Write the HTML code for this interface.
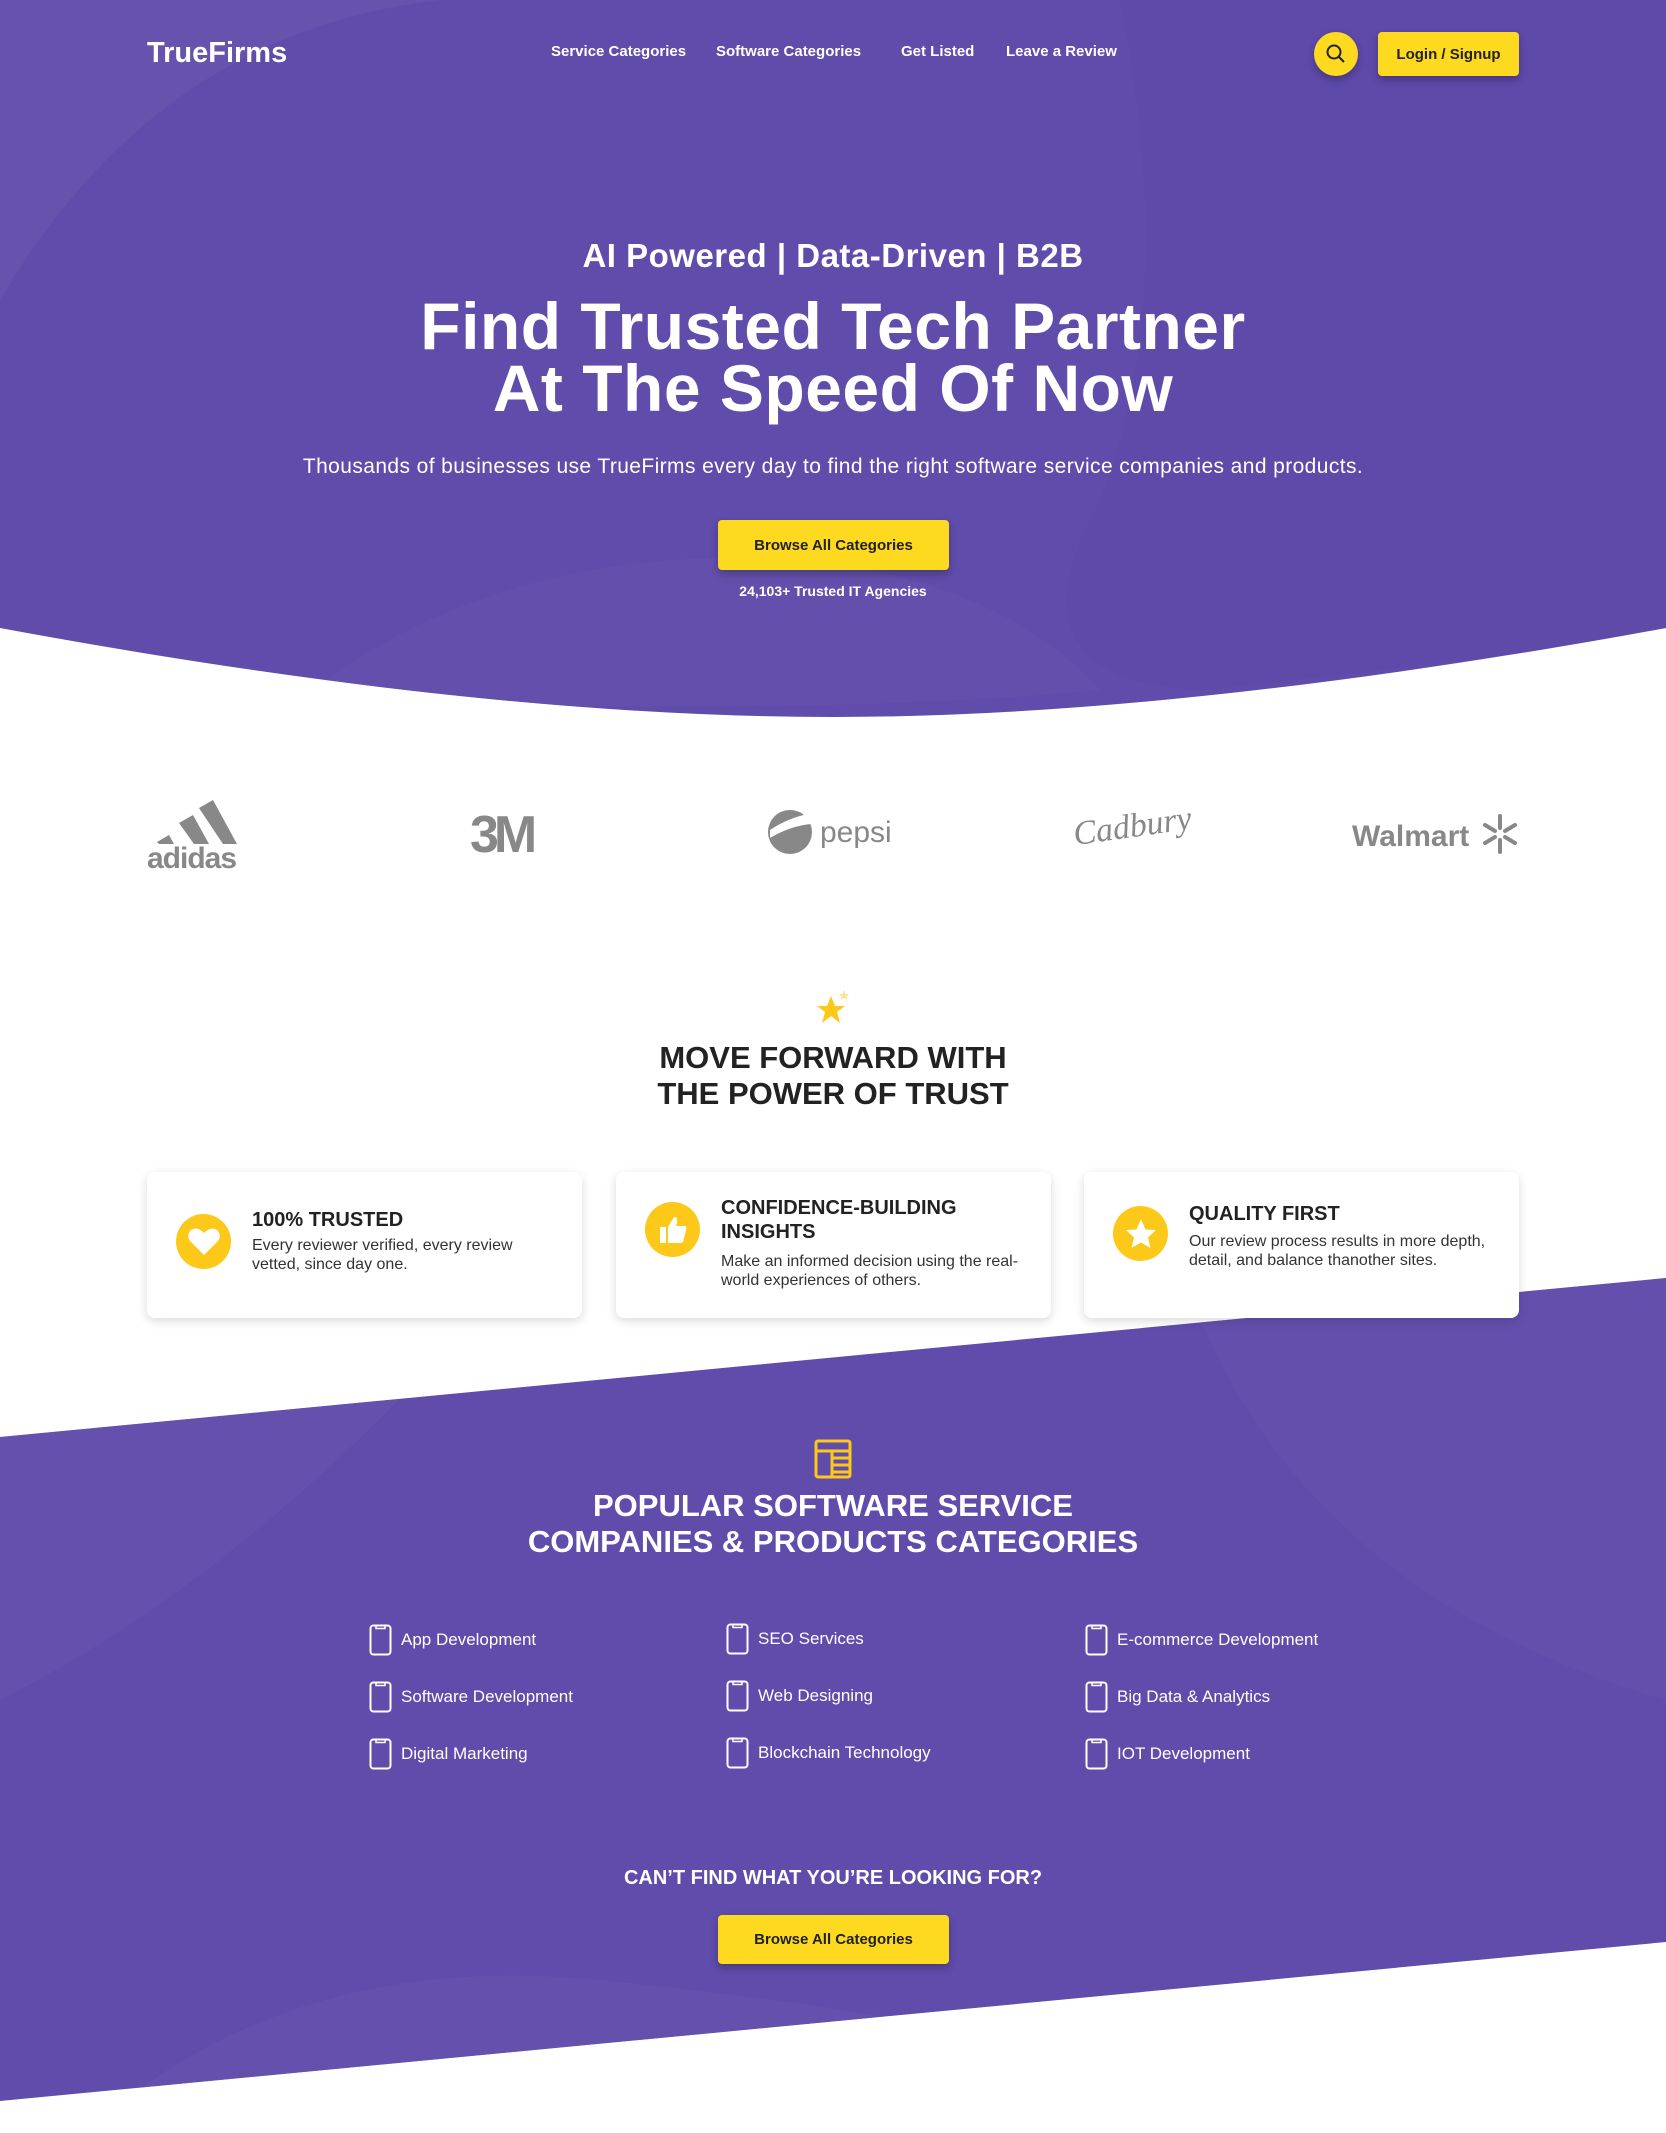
<!DOCTYPE html>
<html><head><meta charset="utf-8"><style>
*{margin:0;padding:0;box-sizing:border-box}
body{width:1666px;height:2133px;position:relative;overflow:hidden;background:#fff;font-family:"Liberation Sans",Arial,sans-serif;color:#222}
.abs{position:absolute}
.c{left:0;width:1666px;text-align:center}
.nav a{position:absolute;top:43px;color:#fff;font-weight:bold;font-size:15px;text-decoration:none;white-space:nowrap}
.btn{position:absolute;background:#fdd91f;border-radius:4px;box-shadow:0 4px 8px rgba(0,0,0,.25);color:#222;font-weight:bold;font-size:15px;display:flex;align-items:center;justify-content:center}
.card{position:absolute;top:1172px;width:435px;height:146px;background:#fff;border-radius:8px;box-shadow:0 3px 10px rgba(0,0,0,.15)}
.card .ic{position:absolute;left:29px;width:55px;height:55px;border-radius:50%;background:#fcc91a;display:flex;align-items:center;justify-content:center}
.card h3{position:absolute;left:105px;font-size:20px;font-weight:bold;color:#222;line-height:24px}
.card p{position:absolute;left:105px;font-size:16px;line-height:19px;color:#333;width:310px}
.cat{position:absolute;color:#fff;font-size:17px;white-space:nowrap}
.cat svg{position:absolute;left:-32px;top:-6px}
</style></head><body>
<svg class="abs" style="left:0;top:0" width="1666" height="2133">
<defs>
<clipPath id="h"><path d="M0 0H1666V628Q1180 717 833 717Q480 717 0 628Z"/></clipPath>
<clipPath id="s"><path d="M0 1437L1666 1278V1942L0 2101Z"/></clipPath>
</defs>
<path d="M0 0H1666V628Q1180 717 833 717Q480 717 0 628Z" fill="#5f4cab"/>
<g clip-path="url(#h)">
<path d="M0 300Q200 -40 600 0L0 0Z" fill="#6653ae"/>
<path d="M1120 0Q1180 300 1100 500Q1000 680 1200 690Q1666 640 1666 628V0Z" fill="#5c49a8" opacity=".6"/>
<path d="M300 700Q500 540 800 560Q1000 580 1100 690Q833 717 300 700Z" fill="#6653ae" opacity=".6"/>
</g>
<path d="M0 1437L1666 1278V1942L0 2101Z" fill="#5f4cab"/>
<g clip-path="url(#s)">
<path d="M0 1437L400 1399Q200 1600 0 1700Z" fill="#6653ae" opacity=".7"/>
<path d="M100 2120Q300 1950 600 1980Q800 2000 900 2020L900 2133H100Z" fill="#6653ae" opacity=".7"/>
<path d="M1200 1320Q1320 1600 1666 1700V1278Z" fill="#6653ae" opacity=".5"/>
</g>
</svg>
<div class="abs" style="left:147px;top:37px;color:#fff;font-weight:bold;font-size:29px">TrueFirms</div>
<div class="nav"><a style="left:551px">Service Categories</a><a style="left:716px">Software Categories</a><a style="left:901px">Get Listed</a><a style="left:1006px">Leave a Review</a></div>
<div class="abs" style="left:1314px;top:32px;width:44px;height:44px;border-radius:50%;background:#fdd91f;box-shadow:0 4px 8px rgba(0,0,0,.25)">
<svg width="44" height="44"><circle cx="20" cy="20" r="6.5" fill="none" stroke="#222" stroke-width="2"/><path d="M25 25L30 30" stroke="#222" stroke-width="2"/></svg></div>
<div class="btn" style="left:1378px;top:32px;width:141px;height:44px">Login / Signup</div>

<div class="abs c" style="top:237px;color:#fff;font-size:33px;font-weight:bold;letter-spacing:.5px">AI Powered | Data-Driven | B2B</div>
<div class="abs c" style="top:295px;color:#fff;font-size:66px;font-weight:bold;line-height:62px;letter-spacing:.5px">Find Trusted Tech Partner<br>At The Speed Of Now</div>
<div class="abs c" style="top:455px;color:#fff;font-size:21px;letter-spacing:.4px">Thousands of businesses use TrueFirms every day to find the right software service companies and products.</div>
<div class="btn" style="left:718px;top:520px;width:231px;height:50px">Browse All Categories</div>
<div class="abs c" style="top:583px;color:#fff;font-size:14px;font-weight:bold">24,103+ Trusted IT Agencies</div>

<!-- logos -->
<svg class="abs" style="left:147px;top:800px" width="105" height="70"><path d="M10 42L22 35L27 44H12Z M32 23L46 15L62 44H47Z M52 8L66 0L90 44H76Z" fill="#888"/><text x="0" y="68" font-family="Liberation Sans" font-weight="bold" font-size="30" fill="#888" letter-spacing="-1">adidas</text></svg>
<div class="abs" style="left:470px;top:805px;font-size:52px;font-weight:bold;color:#888;letter-spacing:-5px;font-family:'Liberation Sans'">3M</div>
<svg class="abs" style="left:768px;top:808px" width="135" height="50"><circle cx="22" cy="24" r="22" fill="#888"/><path d="M2 30Q22 18 43 16Q44 10 40 6Q20 10 2 22Z" fill="#fff"/><text x="52" y="34" font-family="Liberation Sans" font-size="30" fill="#888">pepsi</text></svg>
<div class="abs" style="left:1073px;top:808px;font-size:34px;font-style:italic;color:#888;font-family:'Liberation Serif',serif;transform:rotate(-8deg)">Cadbury</div>
<svg class="abs" style="left:1350px;top:812px" width="172" height="46"><text x="2" y="34" font-family="Liberation Sans" font-weight="bold" font-size="30" fill="#888">Walmart</text><g stroke="#888" stroke-width="4" stroke-linecap="round" transform="translate(150,22)"><path d="M0 -6V-18M0 6V18M5 -3L15 -9M5 3L15 9M-5 -3L-15 -9M-5 3L-15 9"/></g></svg>

<svg class="abs" style="left:812px;top:990px" width="40" height="40"><path d="M19 6L23 16L33 16L25 22L28 33L19 26L10 33L13 22L5 16L15 16Z" fill="#fcc91a"/><path d="M32 0L33.5 4L37 4L34.5 6.5L35.5 10L32 8L28.5 10L29.5 6.5L27 4L30.5 4Z" fill="#f8e39a"/></svg>
<div class="abs c" style="top:1040px;font-size:31px;font-weight:bold;line-height:36px;color:#222">MOVE FORWARD WITH<br>THE POWER OF TRUST</div>

<div class="card" style="left:147px"><div class="ic" style="top:42px"><svg width="34" height="30"><path d="M17 28L3 14Q-1 8 4 3Q10 -1 17 6Q24 -1 30 3Q35 8 31 14Z" fill="#fff"/></svg></div><h3 style="top:36px">100% TRUSTED</h3><p style="top:64px">Every reviewer verified, every review vetted, since day one.</p></div>
<div class="card" style="left:616px"><div class="ic" style="top:30px"><svg width="30" height="30"><rect x="2" y="12" width="6" height="16" fill="#fff"/><path d="M10 12L16 2Q20 2 19 8L18 11H27Q29 12 28 15L25 27Q24 28 22 28H10Z" fill="#fff"/></svg></div><h3 style="top:24px">CONFIDENCE-BUILDING<br>INSIGHTS</h3><p style="top:80px">Make an informed decision using the real-world experiences of others.</p></div>
<div class="card" style="left:1084px"><div class="ic" style="top:34px"><svg width="34" height="34"><path d="M17 2L21.5 12.5L32 13L24 20.5L26.5 31L17 25.5L7.5 31L10 20.5L2 13L12.5 12.5Z" fill="#fff"/></svg></div><h3 style="top:30px">QUALITY FIRST</h3><p style="top:60px;width:300px">Our review process results in more depth, detail, and balance thanother sites.</p></div>

<svg class="abs" style="left:814px;top:1439px" width="38" height="40"><rect x="2" y="2" width="34" height="36" rx="2" fill="none" stroke="#fcc91a" stroke-width="3"/><path d="M2 12H36M18 12V38M18 19H36M18 26H36M18 33H36" stroke="#fcc91a" stroke-width="3"/></svg>
<div class="abs c" style="top:1488px;font-size:31px;font-weight:bold;line-height:36px;color:#fff">POPULAR SOFTWARE SERVICE<br>COMPANIES &amp; PRODUCTS CATEGORIES</div>

<div class="cat" style="left:401px;top:1630px"><svg width="24" height="32"><rect x="1.5" y="1.5" width="20" height="29" rx="3" fill="none" stroke="#fff" stroke-width="2"/><rect x="7" y="1.5" width="9" height="3" fill="none" stroke="#fff" stroke-width="1.5"/></svg>App Development</div>
<div class="cat" style="left:401px;top:1687px"><svg width="24" height="32"><rect x="1.5" y="1.5" width="20" height="29" rx="3" fill="none" stroke="#fff" stroke-width="2"/><rect x="7" y="1.5" width="9" height="3" fill="none" stroke="#fff" stroke-width="1.5"/></svg>Software Development</div>
<div class="cat" style="left:401px;top:1744px"><svg width="24" height="32"><rect x="1.5" y="1.5" width="20" height="29" rx="3" fill="none" stroke="#fff" stroke-width="2"/><rect x="7" y="1.5" width="9" height="3" fill="none" stroke="#fff" stroke-width="1.5"/></svg>Digital Marketing</div>
<div class="cat" style="left:758px;top:1629px"><svg width="24" height="32"><rect x="1.5" y="1.5" width="20" height="29" rx="3" fill="none" stroke="#fff" stroke-width="2"/><rect x="7" y="1.5" width="9" height="3" fill="none" stroke="#fff" stroke-width="1.5"/></svg>SEO Services</div>
<div class="cat" style="left:758px;top:1686px"><svg width="24" height="32"><rect x="1.5" y="1.5" width="20" height="29" rx="3" fill="none" stroke="#fff" stroke-width="2"/><rect x="7" y="1.5" width="9" height="3" fill="none" stroke="#fff" stroke-width="1.5"/></svg>Web Designing</div>
<div class="cat" style="left:758px;top:1743px"><svg width="24" height="32"><rect x="1.5" y="1.5" width="20" height="29" rx="3" fill="none" stroke="#fff" stroke-width="2"/><rect x="7" y="1.5" width="9" height="3" fill="none" stroke="#fff" stroke-width="1.5"/></svg>Blockchain Technology</div>
<div class="cat" style="left:1117px;top:1630px"><svg width="24" height="32"><rect x="1.5" y="1.5" width="20" height="29" rx="3" fill="none" stroke="#fff" stroke-width="2"/><rect x="7" y="1.5" width="9" height="3" fill="none" stroke="#fff" stroke-width="1.5"/></svg>E-commerce Development</div>
<div class="cat" style="left:1117px;top:1687px"><svg width="24" height="32"><rect x="1.5" y="1.5" width="20" height="29" rx="3" fill="none" stroke="#fff" stroke-width="2"/><rect x="7" y="1.5" width="9" height="3" fill="none" stroke="#fff" stroke-width="1.5"/></svg>Big Data &amp; Analytics</div>
<div class="cat" style="left:1117px;top:1744px"><svg width="24" height="32"><rect x="1.5" y="1.5" width="20" height="29" rx="3" fill="none" stroke="#fff" stroke-width="2"/><rect x="7" y="1.5" width="9" height="3" fill="none" stroke="#fff" stroke-width="1.5"/></svg>IOT Development</div>

<div class="abs c" style="top:1867px;font-size:20px;font-weight:bold;color:#fff">CAN’T FIND WHAT YOU’RE LOOKING FOR?</div>
<div class="btn" style="left:718px;top:1915px;width:231px;height:49px">Browse All Categories</div>
</body></html>
